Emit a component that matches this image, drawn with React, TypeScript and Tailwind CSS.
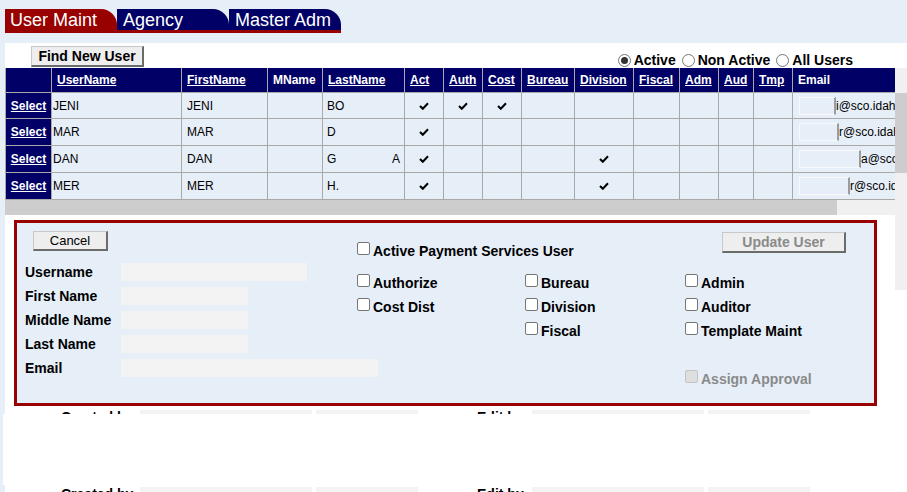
import React from "react";

const grid =
  "grid grid-cols-[46px_130px_86px_55px_82px_39px_39px_39px_53px_59px_46px_39px_35px_39px_150px]";

const flagCols = ["act", "auth", "cost", "bureau", "division", "fiscal", "adm", "aud", "tmp"];

const headers = [
  { label: "UserName", link: true },
  { label: "FirstName", link: true },
  { label: "MName", link: false },
  { label: "LastName", link: true },
  { label: "Act", link: true },
  { label: "Auth", link: true },
  { label: "Cost", link: true },
  { label: "Bureau", link: true },
  { label: "Division", link: true },
  { label: "Fiscal", link: true },
  { label: "Adm", link: true },
  { label: "Aud", link: true },
  { label: "Tmp", link: true },
  { label: "Email", link: false },
];

const users = [
  { user: "JENI", first: "JENI", last: "BO", lastTail: "", flags: ["act", "auth", "cost"], box: 37, email: "i@sco.idaho.gov", h: "h-[26px]" },
  { user: "MAR", first: "MAR", last: "D", lastTail: "", flags: ["act"], box: 40, email: "r@sco.idaho.gov", h: "h-[27px]" },
  { user: "DAN", first: "DAN", last: "G", lastTail: "A", flags: ["act", "division"], box: 62, email: "a@sco.idaho.gov", h: "h-[27px]" },
  { user: "MER", first: "MER", last: "H.", lastTail: "", flags: ["act", "division"], box: 51, email: "r@sco.idaho.gov", h: "h-[27px]" },
];

function Check() {
  return (
    <svg width="10" height="8" viewBox="0 0 10 8">
      <path d="M1 4 L3.8 6.8 L9 1.2" fill="none" stroke="#000" strokeWidth="2" />
    </svg>
  );
}

function Radio({ label, checked }: { label: string; checked?: boolean }) {
  return (
    <label className="flex items-center gap-[3px]">
      <span className="flex h-[13px] w-[13px] items-center justify-center rounded-full border border-[#767676] bg-white">
        {checked && <span className="h-[7px] w-[7px] rounded-full bg-[#333]" />}
      </span>
      <span>{label}</span>
    </label>
  );
}

function Box({ label, disabled }: { label: string; disabled?: boolean }) {
  return (
    <div className="flex items-start">
      <span
        className={
          disabled
            ? "h-[13px] w-[13px] shrink-0 rounded-[2px] border border-[#c4c4c4] bg-[#dedede]"
            : "h-[13px] w-[13px] shrink-0 rounded-[2px] border border-[#767676] bg-white"
        }
      />
      <span
        className={
          disabled
            ? "ml-[3px] mt-[1px] whitespace-nowrap text-[14px] font-bold leading-[16px] text-[#8a8a8a]"
            : "ml-[3px] mt-[1px] whitespace-nowrap text-[14px] font-bold leading-[16px] text-black"
        }
      >
        {label}
      </span>
    </div>
  );
}

function Field({ label, width }: { label: string; width: string }) {
  return (
    <div className="flex h-[18px] items-center">
      <span className="w-[96px] shrink-0 text-[14px] font-bold leading-[18px]">{label}</span>
      <span className={`h-[18px] shrink-0 bg-[#f3f3f3] ${width}`} />
    </div>
  );
}

function AuditRow() {
  return (
    <div className="flex items-start">
      <span className="ml-[56px] -mt-[1px] w-[79px] shrink-0 text-[14px] font-bold leading-[16px]">Created by</span>
      <span className="h-[18px] w-[172px] shrink-0 bg-[#f3f3f3]" />
      <span className="ml-[4px] h-[18px] w-[102px] shrink-0 bg-[#f3f3f3]" />
      <span className="ml-[59px] -mt-[1px] w-[55px] shrink-0 text-[14px] font-bold leading-[16px]">Edit by</span>
      <span className="h-[18px] w-[172px] shrink-0 bg-[#f3f3f3]" />
      <span className="ml-[4px] h-[18px] w-[102px] shrink-0 bg-[#f3f3f3]" />
    </div>
  );
}

function Tab({ label, active }: { label: string; active?: boolean }) {
  return (
    <div
      className={
        active
          ? "h-[21px] w-[112px] rounded-tr-[16px] bg-[#990000] pl-[5px] text-[18px] leading-[22px] text-white"
          : "h-[21px] w-[112px] rounded-tr-[16px] bg-[#000066] pl-[6px] text-[18px] leading-[22px] text-white"
      }
    >
      {label}
    </div>
  );
}

const btn =
  "block border border-[#c8c8c8] border-b-2 border-r-2 border-b-[#6b6b6b] border-r-[#6b6b6b] bg-[#eeeeee]";

export default function App() {
  return (
    <div className="h-[492px] w-[907px] overflow-hidden bg-[#e6eef8] font-['Liberation_Sans',Arial,sans-serif] text-black">
      <div className="pl-[5px] pt-[9px]">
        <div className="flex w-[336px] flex-col">
          <div className="flex">
            <Tab label="User Maint" active />
            <Tab label="Agency" />
            <Tab label="Master Adm" />
          </div>
          <div className="h-[3px] bg-[#990000]" />
        </div>
      </div>

      <div className="ml-[5px] mt-[10px] h-[449px] bg-white">
        <div className="flex h-[25px] justify-between">
          <button className={`${btn} ml-[26px] mt-[3px] h-[21px] w-[113px] text-[14px] font-bold leading-[16px]`}>
            Find New User
          </button>
          <div className="mr-[54px] mt-[9px] flex h-[16px] gap-[6px] text-[14px] font-bold leading-[16px]">
            <Radio label="Active" checked />
            <Radio label="Non Active" />
            <Radio label="All Users" />
          </div>
        </div>

        <div className="flex">
          <div className="w-[890px]">
            <div className="h-[132px] w-[890px] overflow-hidden text-[12px] leading-[14px]">
              <div className="w-[938px] border-l border-[#a9a9a9]">
                <div className={`${grid} h-[25px] bg-[#000066] text-white`}>
                  <div className="border-b border-r border-[#a9a9a9]" />
                  {headers.map((h) => (
                    <div
                      key={h.label}
                      className="flex items-center border-b border-r border-[#a9a9a9] pl-[5px] font-bold"
                    >
                      <span className={h.link ? "underline" : ""}>{h.label}</span>
                    </div>
                  ))}
                </div>
                {users.map((u) => (
                  <div key={u.user} className={`${grid} ${u.h} bg-[#e6eef8]`}>
                    <div className="flex items-center justify-center border-b border-r border-[#a9a9a9] bg-[#000066] font-bold text-white">
                      <span className="underline">Select</span>
                    </div>
                    <div className="flex items-center border-b border-r border-[#a9a9a9] pl-[1px]">{u.user}</div>
                    <div className="flex items-center border-b border-r border-[#a9a9a9] pl-[5px]">{u.first}</div>
                    <div className="border-b border-r border-[#a9a9a9]" />
                    <div className="flex items-center justify-between border-b border-r border-[#a9a9a9] pl-[4px] pr-[4px]">
                      <span>{u.last}</span>
                      <span>{u.lastTail}</span>
                    </div>
                    {flagCols.map((c) => (
                      <div key={c} className="flex items-center justify-center border-b border-r border-[#a9a9a9]">
                        {u.flags.includes(c) && <Check />}
                      </div>
                    ))}
                    <div className="flex items-center whitespace-nowrap border-b border-r border-[#a9a9a9] pl-[6px]">
                      <span
                        style={{ width: u.box }}
                        className="h-[18px] shrink-0 border border-[#f7f9fd] border-r-2 border-r-[#9c9c9c]"
                      />
                      <span>{u.email}</span>
                    </div>
                  </div>
                ))}
              </div>
            </div>

            <div className="flex h-[15px]">
              <div className="w-[832px] bg-[#cdcdcd]" />
              <div className="flex-1 bg-[#f0f0f0]" />
            </div>

            <div className="ml-[9px] mt-[5px] flex h-[186px] w-[863px] border-[3px] border-[#990000] bg-[#e6eef8]">
              <div className="w-[340px] shrink-0 pl-[8px] pt-[8px]">
                <button className={`${btn} ml-[8px] h-[20px] w-[75px] text-[13px] leading-[16px]`}>
                  Cancel
                </button>
                <div className="mt-[12px] flex flex-col gap-[6px]">
                  <Field label="Username" width="w-[186px]" />
                  <Field label="First Name" width="w-[127px]" />
                  <Field label="Middle Name" width="w-[127px]" />
                  <Field label="Last Name" width="w-[127px]" />
                  <Field label="Email" width="w-[257px]" />
                </div>
              </div>

              <div className="flex-1">
                <div className="flex h-[35px] items-start justify-between">
                  <div className="mt-[19px]">
                    <Box label="Active Payment Services User" />
                  </div>
                  <button
                    className={`${btn} mr-[28px] mt-[9px] h-[21px] w-[124px] text-[14px] font-bold leading-[16px] text-[#8a8a8a]`}
                  >
                    Update User
                  </button>
                </div>
                <div className="mt-[16px] grid grid-cols-[168px_160px_1fr] grid-rows-[24px_24px_24px_24px_24px]">
                  <Box label="Authorize" />
                  <Box label="Bureau" />
                  <Box label="Admin" />
                  <Box label="Cost Dist" />
                  <Box label="Division" />
                  <Box label="Auditor" />
                  <div />
                  <Box label="Fiscal" />
                  <Box label="Template Maint" />
                  <div />
                  <div />
                  <div />
                  <div />
                  <div />
                  <Box label="Assign Approval" disabled />
                </div>
              </div>
            </div>

            <div className="h-[8px] overflow-hidden pt-[4px]">
              <AuditRow />
            </div>
            <div className="-ml-[2px] h-[71px] bg-white" />
            <div className="pt-[2px]">
              <AuditRow />
            </div>
          </div>

          <div className="h-[222px] w-[12px] bg-[#f0f0f0] pt-[25px]">
            <div className="h-[80px] bg-[#cdcdcd]" />
          </div>
        </div>
      </div>
    </div>
  );
}
